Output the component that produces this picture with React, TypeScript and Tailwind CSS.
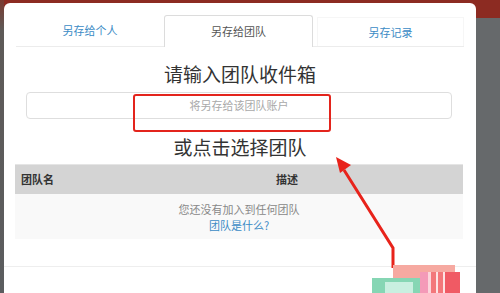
const font = { fontFamily: '"Noto Sans CJK SC", "Noto Sans", sans-serif' };

const App = () => {
  return (
    <div
      className="relative w-[500px] h-[293px] overflow-hidden bg-[linear-gradient(to_bottom,#8c2b22_0,#8c2b22_18px,#66696b_18px)]"
      style={font}
    >
      <div className="flex h-full">
        {/* left backdrop strip */}
        <div className="w-[4px] h-full bg-[linear-gradient(to_bottom,#7a3a30_0,#5e5a58_30px,#5b5d5f_100%)]" />

        {/* modal */}
        <div className="mt-[3px] w-[472px] h-[290px] bg-white rounded-t-[6px] flex flex-col">
          {/* tabs */}
          <div className="mt-[12px] mx-[12px] flex h-[32px] border-b border-[#ececec]">
            <div className="w-[148px] flex items-center justify-center text-[11px] text-[#3b8bc5]">
              另存给个人
            </div>
            <div className="w-[149px] -mb-px bg-white flex items-center justify-center border border-b-0 border-[#dcdcdc] rounded-t-[3px] text-[11px] text-[#555]">
              另存给团队
            </div>
            <div className="ml-[4px] mt-[2px] w-[147px] flex items-center justify-center border border-b-0 border-[#f6f6f6] text-[11px] text-[#3b8bc5]">
              另存记录
            </div>
          </div>

          {/* team inbox input */}
          <div className="mt-[15px] h-[24px] leading-[24px] text-center text-[19px] text-[#333]">
            请输入团队收件箱
          </div>
          <div className="mt-[6px] ml-[22px] w-[426px] h-[27px] rounded-[4px] border border-[#dedede] flex items-center justify-center text-[11px] text-[#a9a9a9]">
            将另存给该团队账户
          </div>

          <div className="mt-[16px] h-[24px] leading-[24px] text-center text-[19px] text-[#333]">
            或点击选择团队
          </div>

          {/* team table */}
          <div className="mt-[5px] ml-[11px] w-[448px] border-t border-[#e5e5e5]">
            <div className="flex h-[29px] items-center bg-[#d4d4d4] text-[11px] font-bold text-[#333]">
              <div className="w-[253px] pl-[6px]">团队名</div>
              <div className="pl-[8px]">描述</div>
            </div>
            <div className="h-[45px] bg-[#f9f9f9] flex flex-col items-center justify-center text-[11px] leading-[16px]">
              <div className="text-[#888]">您还没有加入到任何团队</div>
              <div className="text-[#3b8bc5]">团队是什么?</div>
            </div>
          </div>

          {/* footer */}
          <div className="mt-[27px] border-t border-[#eeeeee] flex-1" />
        </div>
      </div>

      {/* annotation: red box */}
      <div className="absolute left-[133px] top-[94px] w-[198px] h-[38px] border-2 border-[#e3241c] rounded-[3px]" />

      {/* annotation: red arrow */}
      <svg className="absolute left-0 top-0" width="500" height="293" viewBox="0 0 500 293">
        <polyline points="344,170 393,248 393,268" fill="none" stroke="#e8231b" strokeWidth="3" />
        <polygon points="336,157 351,165 340,173" fill="#e8231b" />
      </svg>

      {/* blurred button remains */}
      <div className="absolute left-[393px] top-[265px] w-[62px] h-[14px] bg-[#f6a9a1]" />
      <div className="absolute left-[372px] top-[278px] w-[50px] h-[15px] bg-[#86d6b4]" />
      <div className="absolute left-[385px] top-[282px] w-[28px] h-[11px] bg-[#c9efe0]" />
      <div className="absolute left-[420px] top-[272px] w-[40px] h-[21px] bg-[linear-gradient(to_right,#f49ab8_0,#f49ab8_8px,#fbd5dc_8px,#fbd5dc_11px,#f3777a_11px,#f3777a_16px,#fde3e3_16px,#fde3e3_18px,#f3777a_18px,#f3777a_23px,#fde3e3_23px,#fde3e3_25px,#f05a64_25px)]" />
    </div>
  );
};

export default App;
